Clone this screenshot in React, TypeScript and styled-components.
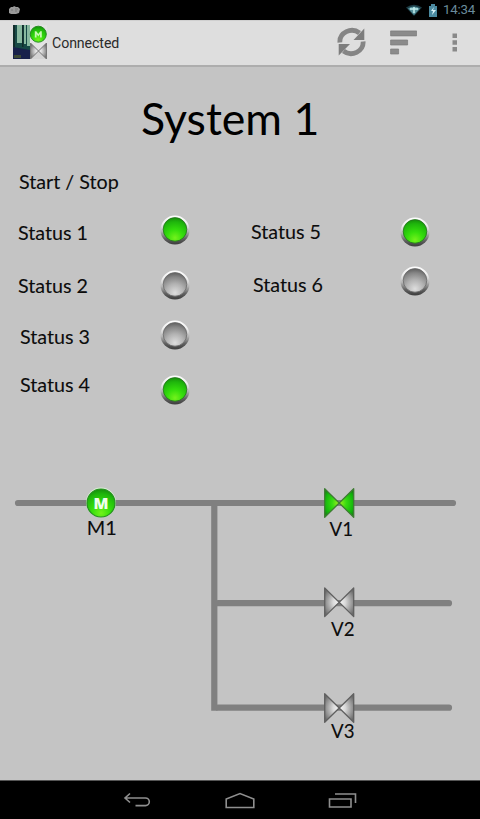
import React from "react";
import styled, { createGlobalStyle } from "styled-components";

const GlobalStyle = createGlobalStyle`
  body { margin: 0; background: #c4c4c4; }
  * { box-sizing: border-box; }
  svg { display: block; flex: none; }
`;

const Screen = styled.div`
  width: 480px;
  height: 819px;
  display: flex;
  flex-direction: column;
  background: #c4c4c4;
  font-family: Lato, "Open Sans", sans-serif;
  color: #0c0c0c;
  overflow: hidden;
`;

const StatusBar = styled.header`
  height: 20px;
  flex: none;
  background: #000;
  display: flex;
  align-items: center;
  padding: 0 5px 0 8px;
`;

const Spacer = styled.div`
  flex: 1;
`;

const StatusIcons = styled.div`
  display: flex;
  align-items: center;
  gap: 6px;
`;

const Clock = styled.span`
  font: 13.3px/20px Roboto, sans-serif;
  color: #6a8b9b;
  margin-left: 5px;
  width: 32px;
  white-space: nowrap;
  letter-spacing: -0.25px;
`;

const ActionBar = styled.div`
  height: 47px;
  flex: none;
  display: flex;
  align-items: center;
  padding: 0 22px 2px 12px;
  background: #dedede;
  border-top: 1px solid #cfcfcf;
  border-bottom: 2px solid #adadad;
`;

const AppTitle = styled.span`
  font: 14.2px/20px Roboto, sans-serif;
  color: #2b2b2b;
  margin: 2px 0 0 5px;
  letter-spacing: -0.1px;
`;

const Actions = styled.div`
  display: grid;
  grid-template-columns: 53px 62px 6px;
  align-items: center;
`;

const Content = styled.main`
  flex: 1;
  display: flex;
  flex-direction: column;
`;

const Title = styled.h1`
  margin: 25px 0 0 141px;
  font-weight: 400;
  font-size: 44.6px;
  line-height: 52px;
  white-space: nowrap;
  color: #000;
`;

const Panel = styled.section`
  display: grid;
  grid-template-columns: 160px 91px 149px 80px;
  height: 310px;
  margin-top: 26px;
`;

const Column = styled.div`
  display: flex;
  flex-direction: column;
  align-items: flex-start;
`;

const Label = styled.span<{ $gap: number; $indent: number }>`
  margin: ${(p) => p.$gap}px 0 0 ${(p) => p.$indent}px;
  font-size: 19.7px;
  line-height: 24px;
  white-space: nowrap;
  -webkit-text-stroke: 0.1px #0c0c0c;
`;

const LampSlot = styled.div<{ $gap: number }>`
  margin-top: ${(p) => p.$gap}px;
  height: 32px;
`;

const NavBar = styled.nav`
  height: 39px;
  flex: none;
  background: #000;
  border-top: 1px solid #555;
  display: flex;
  justify-content: center;
  align-items: center;
  gap: 73px;
`;

const DiagramText = styled.text`
  font-family: Lato, sans-serif;
  font-size: 19.8px;
  fill: #0c0c0c;
  stroke: #0c0c0c;
  stroke-width: 0.1px;
`;

const MotorText = styled.text`
  font-family: "Open Sans", sans-serif;
  font-size: 15.5px;
  font-weight: 800;
  fill: #f0ffec;
`;

const Defs = styled.svg`
  position: absolute;
`;

const Gradients = () => (
  <Defs width="0" height="0">
    <defs>
      <linearGradient id="rim" x1="0" y1="0" x2="0" y2="1">
        <stop offset="0" stopColor="#fff" />
        <stop offset=".3" stopColor="#ececec" />
        <stop offset=".55" stopColor="#b4b4b4" />
        <stop offset=".8" stopColor="#606060" />
        <stop offset="1" stopColor="#3c3c3c" />
      </linearGradient>
      <radialGradient id="on" cx=".5" cy=".86" r=".85">
        <stop offset="0" stopColor="#74f21c" />
        <stop offset=".4" stopColor="#35de0c" />
        <stop offset=".8" stopColor="#1fb60c" />
        <stop offset="1" stopColor="#16900b" />
      </radialGradient>
      <radialGradient id="off" cx=".5" cy=".86" r=".85">
        <stop offset="0" stopColor="#dedede" />
        <stop offset=".45" stopColor="#b2b2b2" />
        <stop offset=".8" stopColor="#858585" />
        <stop offset="1" stopColor="#606060" />
      </radialGradient>
      <radialGradient id="valveOn" cx=".5" cy=".5" r=".6">
        <stop offset="0" stopColor="#a6ee20" />
        <stop offset=".4" stopColor="#39dc12" />
        <stop offset=".85" stopColor="#11b40b" />
        <stop offset="1" stopColor="#168b12" />
      </radialGradient>
      <radialGradient id="valveOff" cx=".5" cy=".5" r=".6">
        <stop offset="0" stopColor="#f8f8f8" />
        <stop offset=".35" stopColor="#dadada" />
        <stop offset=".85" stopColor="#858585" />
        <stop offset="1" stopColor="#6b6b6b" />
      </radialGradient>
    </defs>
  </Defs>
);

const Lamp = ({ on }: { on: boolean }) => (
  <svg width="30" height="32" viewBox="0 0 30 32">
    <circle cx="15" cy="16" r="14.5" fill="url(#rim)" />
    <circle cx="15" cy="15.4" r="11.8" fill={on ? "url(#on)" : "url(#off)"} stroke={on ? "#24731d" : "#6a6a6a"} strokeWidth=".8" />
  </svg>
);

const Valve = ({ x, y, on }: { x: number; y: number; on: boolean }) => (
  <path
    d={`M${x - 14.5} ${y - 14.3}L${x + 14.5} ${y + 14.3}V${y - 14.3}L${x - 14.5} ${y + 14.3}Z`}
    fill={on ? "url(#valveOn)" : "url(#valveOff)"}
    stroke={on ? "#3d7c32" : "#606060"}
    strokeWidth="1.3"
    strokeLinejoin="round"
  />
);

const Diagram = () => (
  <svg width="480" height="300" viewBox="0 480 480 300">
    <g fill="none" stroke="#808080" strokeWidth="6.2">
      <path d="M18 503H453M218 603.2H449M218 707.7H449" strokeLinecap="round" />
      <path d="M214.3 503V710.8" />
    </g>
    <circle cx="101" cy="502.4" r="14.9" fill="#dcf0d6" />
    <circle cx="101" cy="503" r="14" fill="url(#on)" stroke="#269020" strokeWidth="1.2" />
    <MotorText x="101" y="508.5" textAnchor="middle">M</MotorText>
    <Valve x={339.2} y={503} on />
    <Valve x={339.2} y={602.3} on={false} />
    <Valve x={339.2} y={708} on={false} />
    <DiagramText x="86.8" y="534.5" textLength="30" lengthAdjust="spacingAndGlyphs">M1</DiagramText>
    <DiagramText x="329.5" y="536" textLength="23.5" lengthAdjust="spacingAndGlyphs">V1</DiagramText>
    <DiagramText x="331" y="636" textLength="23.5" lengthAdjust="spacingAndGlyphs">V2</DiagramText>
    <DiagramText x="331" y="738" textLength="23.5" lengthAdjust="spacingAndGlyphs">V3</DiagramText>
  </svg>
);

const AppIcon = () => (
  <svg width="35" height="35" viewBox="0 0 35 35">
    <path d="M1 0h17v34H1z" fill="#174946" />
    <path d="M5 0h5v18H5zM12 0h2v19h-2zM15 0h3v21h-3z" fill="#89b9a0" />
    <path d="M1 0h2v22H1zM10 0h1.5v22H10z" fill="#122d2b" />
    <path d="M1 22l17 3v9H1z" fill="#17204a" />
    <path d="M2 30h7v3H2z" fill="#3b4835" />
    <path d="M18 0h17v34H18z" fill="#e3e3e3" />
    <circle cx="26.3" cy="9.2" r="8" fill="url(#on)" stroke="#288c22" />
    <path d="M22.8 12.5V6.2h1.5l2 2.9 2-2.9h1.5v6.3H28V9.3l-1.7 2.3-1.7-2.3v3.2z" fill="#c8f8b4" />
    <path d="M18.5 18v16h16V18l-8 7.5z" fill="#d4d4d4" />
    <path d="M18.5 18l16 16V18l-16 16z" fill="url(#valveOff)" stroke="#777" strokeWidth="1" />
  </svg>
);

const leftLabels = [
  { text: "Start / Stop", gap: 0, indent: 19 },
  { text: "Status 1", gap: 27, indent: 18 },
  { text: "Status 2", gap: 29, indent: 18 },
  { text: "Status 3", gap: 27, indent: 20 },
  { text: "Status 4", gap: 24, indent: 20 },
];

const leftLamps = [
  { on: true, gap: 44 },
  { on: false, gap: 23 },
  { on: false, gap: 18 },
  { on: true, gap: 23 },
];

export default function App() {
  return (
    <Screen>
      <GlobalStyle />
      <Gradients />
      <StatusBar>
        <svg width="13" height="10" viewBox="0 0 13 10">
          <path d="M1 8V4l2-2h2l1-1 2 1h2l2 2-1 4-3 1H3z" fill="#9a9a9a" />
          <path d="M3 5h2M7 4h3M7 6h2" stroke="#777" />
        </svg>
        <Spacer />
        <StatusIcons>
          <svg width="16" height="12" viewBox="0 0 16 12">
            <path d="M0 3.5Q8-2 16 3.5L8 12z" fill="#1c3c45" />
            <path d="M2 4.5q6-4 12 0L8 11z" fill="#56909b" />
            <path d="M4 5h8M8 3v6" stroke="#c4eeee" strokeWidth="1.5" />
          </svg>
          <svg width="10" height="13" viewBox="0 0 10 13">
            <path d="M3 0h4v2h2v11H1V2h2z" fill="#4b8aa0" />
            <path d="M6 3L3 7h2l-1 4 4-5H5z" fill="#dbf4f8" />
          </svg>
        </StatusIcons>
        <Clock>14:34</Clock>
      </StatusBar>
      <ActionBar>
        <AppIcon />
        <AppTitle>Connected</AppTitle>
        <Spacer />
        <Actions>
          <svg width="30" height="30" viewBox="0 0 30 30">
            <path d="M2.9 15.5A12 11.3 0 0 1 22.5 6M26.1 14.5A12 11.3 0 0 1 6.5 24" fill="none" stroke="#858585" strokeWidth="4.8" />
            <path d="M27.3 1.5V13H16.5zM1.7 28.5V17H13z" fill="#7d7d7d" />
          </svg>
          <svg width="27" height="25" viewBox="0 0 27 25">
            <path d="M.6.9h26v5H.6zM.6 10h17v5h-17zM.6 19h8v5h-8z" fill="#8b8b8b" stroke="#7b7b7b" strokeWidth=".7" />
          </svg>
          <svg width="6" height="19" viewBox="0 0 6 19">
            <path d="M.5.5h4.5V5H.5zM.5 7.2h4.5v4.5H.5zM.5 14h4.5v4.5H.5z" fill="#898989" />
          </svg>
        </Actions>
      </ActionBar>
      <Content>
        <Title>System 1</Title>
        <Panel>
          <Column>
            {leftLabels.map((l) => (
              <Label key={l.text} $gap={l.gap} $indent={l.indent}>{l.text}</Label>
            ))}
          </Column>
          <Column>
            {leftLamps.map((l, i) => (
              <LampSlot key={i} $gap={l.gap}><Lamp on={l.on} /></LampSlot>
            ))}
          </Column>
          <Column>
            <Label $gap={50} $indent={0}>Status 5</Label>
            <Label $gap={29} $indent={2}>Status 6</Label>
          </Column>
          <Column>
            <LampSlot $gap={46}><Lamp on /></LampSlot>
            <LampSlot $gap={17}><Lamp on={false} /></LampSlot>
          </Column>
        </Panel>
        <Diagram />
      </Content>
      <NavBar>
        <svg width="29" height="17" viewBox="0 0 29 17">
          <path d="M7 1.5L2 6l5 4.5M2.5 6h20a3.7 3.7 0 0 1 0 7.6H12.5" fill="none" stroke="#8f8f8f" strokeWidth="1.6" />
        </svg>
        <svg width="30" height="17" viewBox="0 0 30 17">
          <path d="M1.2 15.5V7L15 1.5 28.8 7v8.5z" fill="none" stroke="#8f8f8f" strokeWidth="1.6" />
        </svg>
        <svg width="29" height="17" viewBox="0 0 29 17">
          <path d="M1.5 7h21.5v8H1.5zM7 2h20.5v9" fill="none" stroke="#8f8f8f" strokeWidth="1.6" />
        </svg>
      </NavBar>
    </Screen>
  );
}
